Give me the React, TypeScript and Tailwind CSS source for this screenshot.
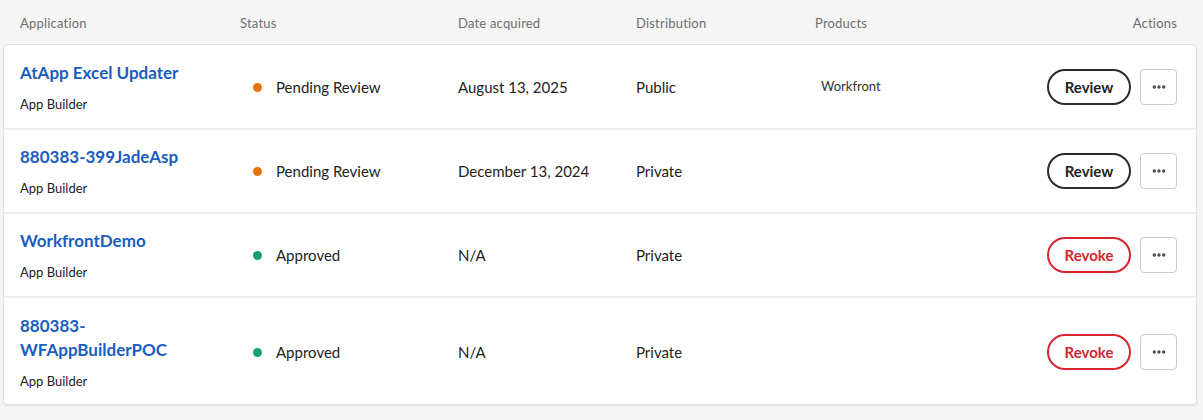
import { MoreHorizontal } from "lucide-react";

type Row = {
  name: string;
  status: "pending" | "approved";
  date: string;
  distribution: string;
  products?: string;
};

const rows: Row[] = [
  { name: "AtApp Excel Updater", status: "pending", date: "August 13, 2025", distribution: "Public", products: "Workfront" },
  { name: "880383-399JadeAsp", status: "pending", date: "December 13, 2024", distribution: "Private" },
  { name: "WorkfrontDemo", status: "approved", date: "N/A", distribution: "Private" },
  { name: "880383-WFAppBuilderPOC", status: "approved", date: "N/A", distribution: "Private" },
];

const cols = "grid grid-cols-[220px_218px_178px_179px_1fr_auto] items-center";

// per-row vertical padding, tuned to the screenshot
const pads = ["pt-[16px] pb-[15px]", "pt-[15px] pb-[15px]", "pt-[15px] pb-[15px]", "pt-[16px] pb-[14px]"];

function StatusCell({ status }: { status: Row["status"] }) {
  const pending = status === "pending";
  return (
    <div className="flex items-center gap-[14px] pl-[13px]">
      <span className={`h-[9px] w-[9px] rounded-full ${pending ? "bg-[#e8730c]" : "bg-[#15a16b]"}`} />
      <span className="text-[15px] text-[#222]">{pending ? "Pending Review" : "Approved"}</span>
    </div>
  );
}

function ActionButton({ status }: { status: Row["status"] }) {
  if (status === "pending") {
    return (
      <button className="h-[36px] w-[84px] rounded-full border-2 border-[#2c2c2c] text-[15px] font-bold text-[#222]">
        Review
      </button>
    );
  }
  return (
    <button className="h-[36px] w-[84px] rounded-full border-2 border-[#d7262d] text-[15px] font-bold text-[#d7262d]">
      Revoke
    </button>
  );
}

export default function App() {
  return (
    <div className="min-h-[420px] bg-[#f5f5f5] font-['Lato',sans-serif]">
      <div className={`${cols} pt-[15px] pb-[13px] pl-[20px] pr-[26px] text-[13px] leading-[16px] tracking-[0.2px] text-[#6e6e6e]`}>
        <div>Application</div>
        <div>Status</div>
        <div>Date acquired</div>
        <div>Distribution</div>
        <div>Products</div>
        <div className="text-right">Actions</div>
      </div>
      <div className="ml-[3px] mr-[6px] rounded-[4px] border border-[#e1e1e1] bg-white shadow-[0_1px_2px_rgba(0,0,0,0.08)]">
        {rows.map((r, i) => (
          <div
            key={r.name}
            className={`${cols} pl-[16px] pr-[19px] ${pads[i]} ${i > 0 ? "border-t-2 border-[#ececec]" : ""}`}
          >
            <div className="flex flex-col gap-[10px]">
              <a className="max-w-[190px] break-words text-[17px] font-bold leading-[24px] text-[#1a5dc0]">{r.name}</a>
              <span className="text-[13px] leading-[18px] text-[#222]">App Builder</span>
            </div>
            <StatusCell status={r.status} />
            <div className="text-[15px] text-[#222]">{r.date}</div>
            <div className="text-[15px] text-[#222]">{r.distribution}</div>
            <div className="pl-[6px] text-[13px] text-[#333]">{r.products ?? ""}</div>
            <div className="flex items-center gap-[9px]">
              <ActionButton status={r.status} />
              <button className="flex h-[36px] w-[37px] items-center justify-center rounded-[4px] border border-[#cacaca] text-[#444]">
                <MoreHorizontal size={16} strokeWidth={3} />
              </button>
            </div>
          </div>
        ))}
      </div>
    </div>
  );
}
